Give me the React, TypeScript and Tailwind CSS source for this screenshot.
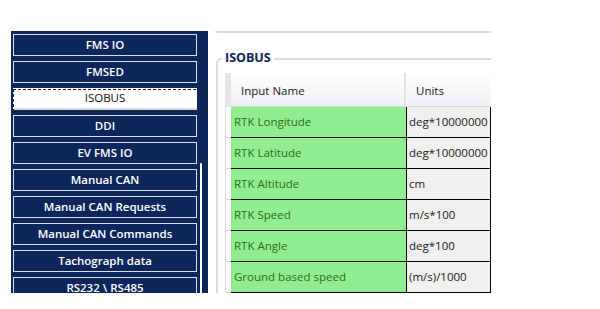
import React from 'react'

const navItems = [
  'FMS IO',
  'FMSED',
  'ISOBUS',
  'DDI',
  'EV FMS IO',
  'Manual CAN',
  'Manual CAN Requests',
  'Manual CAN Commands',
  'Tachograph data',
  'RS232 \\ RS485',
]

const inputs = [
  ['RTK Longitude', 'deg*10000000'],
  ['RTK Latitude', 'deg*10000000'],
  ['RTK Altitude', 'cm'],
  ['RTK Speed', 'm/s*100'],
  ['RTK Angle', 'deg*100'],
  ['Ground based speed', '(m/s)/1000'],
]

function NavButton({ label, active }: { label: string; active: boolean }) {
  if (active) {
    return (
      <div className="relative shrink-0">
        <div className="h-[22px] bg-white border-b-2 border-[#d3d8e0] flex items-center justify-center text-[11.5px] text-[#111]">
          {label}
        </div>
        {/* focus rect */}
        <span className="absolute left-0 top-[1px] w-[193px] h-[23px] border border-dashed border-[#222] pointer-events-none" />
      </div>
    )
  }
  return (
    <div className="h-[22px] shrink-0 border border-[#d8dde6] flex items-center justify-center text-[11.5px] font-semibold text-white">
      {label}
    </div>
  )
}

export default function App() {
  return (
    <div className="w-[600px] h-[309px] bg-white overflow-hidden font-['Open_Sans',sans-serif]">
      <div className="flex pt-[31px] pl-[11px] h-[293px]">
        {/* SIDEBAR */}
        <aside className="w-[197px] h-full bg-[#0c265c] flex overflow-hidden pt-[3px] pl-[2px]">
          <div className="flex flex-col gap-[5px] w-[184px] shrink-0">
            {navItems.map((n) => (
              <NavButton key={n} label={n} active={n === 'ISOBUS'} />
            ))}
          </div>
          <div className="ml-[3px] mt-[129px] w-[2px] h-full bg-white rounded-t-full shrink-0" />
        </aside>

        {/* CONTENT */}
        <main className="ml-[7px] w-[276px] h-full overflow-hidden flex flex-col">
          <div className="h-[2px] bg-[#d7dee6] rounded-bl-[2px]" />

          <div className="relative mt-[25px] ml-[1px] flex-1 border-t-2 border-l-2 border-[#d7dee6] rounded-tl-[5px] pt-[13px] pl-[7px]">
            <span className="absolute -top-[10px] left-[4px] bg-white px-[3px] text-[12.5px] leading-[16px] font-bold text-[#0c265c]">
              ISOBUS
            </span>

            <div className="w-[266px] text-[11.5px] text-[#1a1a1a]">
              {/* header */}
              <div className="flex h-[34px]">
                <div className="w-[6px] bg-[#e6e6e6]" />
                <div className="w-[175px] flex items-center pl-[10px] pt-[2px] bg-gradient-to-b from-white to-[#eef0f3] border-r-2 border-b border-r-[#e2e2e2] border-b-[#d5d5d5]">
                  Input Name
                </div>
                <div className="flex-1 flex items-center pl-[10px] pt-[2px] bg-gradient-to-b from-white to-[#eef0f3] border-b border-[#d5d5d5]">
                  Units
                </div>
              </div>

              {/* rows */}
              {inputs.map(([name, unit]) => (
                <div key={name} className="flex h-[31px]">
                  <div className="w-[6px] bg-white border-l border-b border-[#dcdcdc]" />
                  <div className="w-[175px] flex items-center pl-[3px] bg-[#90ee90] border-b border-black text-[#2f6d17]">
                    {name}
                  </div>
                  <div className="w-[85px] flex items-center pl-[2px] bg-[#f0f0f0] border-l border-r border-b border-black whitespace-nowrap overflow-hidden">
                    {unit}
                  </div>
                </div>
              ))}
            </div>
          </div>
        </main>
      </div>
    </div>
  )
}
